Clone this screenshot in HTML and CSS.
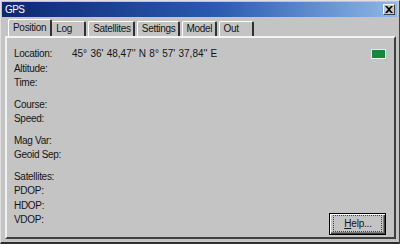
FILE: index.html
```html
<!DOCTYPE html>
<html>
<head>
<meta charset="utf-8">
<link rel="stylesheet" href="styles.css">
</head>
<body>
<div class="window">
  <div class="titlebar">
    <span class="title">GPS</span>
    <span class="close"><svg width="8" height="7" viewBox="0 0 8 7"><path d="M0 0h2l2 2 2-2h2L5 3.5 8 7H6L4 5 2 7H0l3-3.5z" fill="#000"/></svg></span>
  </div>
  <div class="tabs">
    <div class="tab active">Position</div>
    <div class="tab">Log</div>
    <div class="tab">Satellites</div>
    <div class="tab">Settings</div>
    <div class="tab">Model</div>
    <div class="tab">Out</div>
  </div>
  <div class="panel">
    <div class="rows">
      <div class="group">
        <div class="row"><span class="label">Location:</span><span class="value">45° 36' 48,47'' N 8° 57' 37,84'' E</span></div>
        <div class="row"><span class="label">Altitude:</span></div>
        <div class="row"><span class="label">Time:</span></div>
      </div>
      <div class="group">
        <div class="row"><span class="label">Course:</span></div>
        <div class="row"><span class="label">Speed:</span></div>
      </div>
      <div class="group">
        <div class="row"><span class="label">Mag Var:</span></div>
        <div class="row"><span class="label">Geoid Sep:</span></div>
      </div>
      <div class="group">
        <div class="row"><span class="label">Satellites:</span></div>
        <div class="row"><span class="label">PDOP:</span></div>
        <div class="row"><span class="label">HDOP:</span></div>
        <div class="row"><span class="label">VDOP:</span></div>
      </div>
    </div>
    <div class="side">
      <div class="led"></div>
      <div class="button"><span class="focus"><u>H</u>elp...</span></div>
    </div>
  </div>
</div>
</body>
</html>
```
FILE: styles.css
```css
html, body {
  margin: 0;
  padding: 0;
  background: #c4c4c4;
}
body {
  width: 400px;
  height: 244px;
  font-family: "Liberation Sans", Arial, sans-serif;
  font-size: 10px;
  color: #141414;
}
.window {
  box-sizing: border-box;
  width: 400px;
  height: 244px;
  background: #c4c4c4;
  border-top: 1px solid #e0e0e0;
  border-left: 1px solid #e0e0e0;
  border-right: 1px solid #404040;
  border-bottom: 2px solid #303030;
  padding: 1px 2px 0 1px;
  display: flex;
  flex-direction: column;
}
.titlebar {
  height: 15px;
  background: linear-gradient(to right, #0c2872 0%, #2a5cb0 55%, #8fb8e8 100%);
  display: flex;
  align-items: center;
  justify-content: space-between;
  padding: 0 2px 0 3px;
}
.title {
  color: #fff;
  font-size: 10px;
  letter-spacing: -0.6px;
  line-height: 15px;
}
.close {
  width: 12px;
  height: 11px;
  box-sizing: border-box;
  background: #c4c4c4;
  border-top: 1px solid #fff;
  border-left: 1px solid #fff;
  border-right: 1px solid #404040;
  border-bottom: 1px solid #404040;
  display: flex;
  align-items: center;
  justify-content: center;
}
.tabs {
  display: flex;
  align-items: flex-end;
  height: 17px;
  margin-top: 2px;
  padding-left: 8px;
}
.tab {
  box-sizing: border-box;
  height: 15px;
  min-width: 35px;
  padding: 0 2px 0 4px;
  line-height: 13px;
  letter-spacing: -0.3px;
  border-top: 1px solid #fff;
  border-left: 1px solid #fff;
  border-right: 2px solid #303030;
  border-radius: 2px 2px 0 0;
  margin-right: 2px;
}
.tab.active {
  height: 17px;
  line-height: 15px;
  padding: 0 4px 0 4px;
  margin-left: -2px;
  margin-right: -1px;
  background: #c4c4c4;
  position: relative;
  z-index: 1;
}
.panel {
  flex: 1;
  margin: 0 1px 10px 3px;
  border-top: 2px solid #f4f4f4;
  border-left: 2px solid #f0f0f0;
  border-right: 2px solid #404040;
  border-bottom: 2px solid #404040;
  display: flex;
  justify-content: space-between;
  padding: 9px 8px 2px 7px;
}
.group {
  margin-bottom: 7px;
}
.row {
  height: 14.5px;
  line-height: 14.5px;
  display: flex;
}
.label {
  width: 58px;
  letter-spacing: -0.3px;
}
.value {
  word-spacing: 0.5px;
}
.side {
  display: flex;
  flex-direction: column;
  justify-content: space-between;
  align-items: flex-end;
}
.led {
  width: 13px;
  height: 8px;
  margin-top: 2px;
  background: #128a3c;
  border: 1px solid #0b5a26;
  border-top-color: #e8e8e8;
  border-left-color: #e8e8e8;
  border-right-color: #fff;
  border-bottom-color: #fff;
}
.button {
  box-sizing: border-box;
  width: 57px;
  height: 22px;
  border: 1px solid #000;
  box-shadow: inset 1px 1px 0 #fff, inset -1px -1px 0 #404040, inset -2px -2px 0 #808080;
  display: flex;
  align-items: center;
  justify-content: center;
}
.focus {
  border: 1px dotted #444;
  padding: 1px 9px 1px 10px;
  line-height: 13px;
  letter-spacing: -0.2px;
}
```
